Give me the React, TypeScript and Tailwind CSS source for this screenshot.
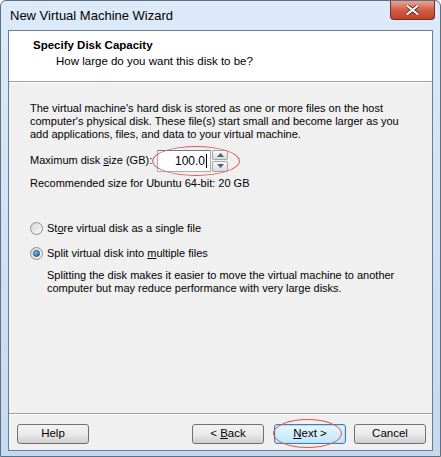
import React from 'react'

const font = { fontFamily: '"Liberation Sans", Arial, sans-serif' }

function Radio({ checked }: { checked?: boolean }) {
    return (
        <span className="relative inline-flex h-[13px] w-[13px] shrink-0 items-center justify-center rounded-full border border-[#8e8f8f] bg-gradient-to-br from-[#d6d6d6] to-[#f8f8f8]">
            {checked && (
                <span className="h-[7px] w-[7px] rounded-full border border-[#1c4a6e] bg-gradient-to-br from-[#8fd0f5] to-[#1a6aa8]" />
            )}
        </span>
    )
}

function Button({ label, focused }: { label: React.ReactNode; focused?: boolean }) {
    return (
        <div
            className={`flex h-[20px] w-[72px] items-center justify-center whitespace-pre rounded-[3px] border text-[11.5px] text-black ${
                focused
                    ? 'border-[#3c7fb1] bg-gradient-to-b from-[#eaf6fd] to-[#bee6fd] shadow-[inset_0_0_0_1px_#b4e0f8]'
                    : 'border-[#707070] bg-gradient-to-b from-[#f2f2f2] via-[#ebebeb] to-[#cfcfcf]'
            }`}
        >
            {label}
        </div>
    )
}

export default function App() {
    return (
        <div style={font} className="h-[457px] w-[441px] overflow-hidden bg-white">
            {/* window frame */}
            <div className="relative flex h-[457px] w-[441px] flex-col rounded-t-[6px] border border-[#5f6f80] bg-gradient-to-b from-[#dceafa] via-[#cfe2f6] to-[#c4daf2] px-[7px] pb-[5px]">
                {/* title bar */}
                <div className="flex h-[29px] shrink-0 items-center pl-[2px] text-[13px] text-black">
                    New Virtual Machine Wizard
                </div>
                <div className="absolute right-[5px] top-0 flex h-[19px] w-[45px] items-center justify-center rounded-b-[4px] border border-t-0 border-[#7a2b22] bg-gradient-to-b from-[#e8a494] via-[#d25d45] to-[#c2402a]">
                    <svg width="13" height="10" viewBox="0 0 13 10">
                        <path d="M1.5 1 L11.5 9 M11.5 1 L1.5 9" stroke="#4a2820" strokeWidth="3.6" strokeLinecap="square" />
                        <path d="M1.5 1 L11.5 9 M11.5 1 L1.5 9" stroke="#ffffff" strokeWidth="2" strokeLinecap="square" />
                    </svg>
                </div>

                {/* client area */}
                <div className="flex flex-1 flex-col border border-[#6e7b88] bg-[#f0f0f0] text-[11px] text-black">
                    {/* header */}
                    <div className="h-[51px] shrink-0 border-b border-[#a0a0a0] bg-white pl-[24px] pt-[6px]">
                        <div className="text-[11.5px] font-bold leading-[16px]">Specify Disk Capacity</div>
                        <div className="pl-[23px] text-[11.5px] leading-[16px]">How large do you want this disk to be?</div>
                    </div>
                    <div className="h-px shrink-0 bg-white" />

                    {/* body */}
                    <div className="flex flex-1 flex-col pl-[21px] pr-[20px] pt-[19px]">
                        <p className="leading-[13px]">
                            The virtual machine's hard disk is stored as one or more files on the host computer's physical disk. These file(s) start small and become larger as you add applications, files, and data to your virtual machine.
                        </p>

                        <div className="mt-[8px] flex h-[23px] items-center">
                            <span className="w-[127px] whitespace-nowrap">
                                Maximum disk <span className="underline">s</span>ize (GB):
                            </span>
                            <div className="relative flex items-center">
                                <div className="flex h-[22px] w-[54px] items-center justify-end border border-[#abadb3] border-t-[#6f7b8a] bg-white pr-[3px] text-[12px]">
                                    100.0<span className="ml-px h-[14px] w-px bg-black" />
                                </div>
                                <div className="ml-[1px] flex h-[22px] w-[16px] flex-col gap-px">
                                    <div className="flex flex-1 items-center justify-center rounded-[2px] border border-[#a4a4a4] bg-gradient-to-b from-[#f7f7f7] to-[#dcdcdc]">
                                        <svg width="7" height="4" viewBox="0 0 7 4"><path d="M0 4 L3.5 0 L7 4 Z" fill="#4d6185" /></svg>
                                    </div>
                                    <div className="flex flex-1 items-center justify-center rounded-[2px] border border-[#a4a4a4] bg-gradient-to-b from-[#f7f7f7] to-[#dcdcdc]">
                                        <svg width="7" height="4" viewBox="0 0 7 4"><path d="M0 0 L7 0 L3.5 4 Z" fill="#4d6185" /></svg>
                                    </div>
                                </div>
                                <div className="pointer-events-none absolute -left-[5px] -top-[4px] h-[30px] w-[88px] rounded-[50%] border border-[#e0584f]" />
                            </div>
                        </div>

                        <div className="mt-[5px] leading-[13px]">Recommended size for Ubuntu 64-bit: 20 GB</div>

                        <div className="mt-[32px] flex items-center gap-[4px] leading-[13px]">
                            <Radio />
                            <span>
                                St<span className="underline">o</span>re virtual disk as a single file
                            </span>
                        </div>
                        <div className="mt-[12px] flex items-center gap-[4px] leading-[13px]">
                            <Radio checked />
                            <span>
                                Split virtual disk into <span className="underline">m</span>ultiple files
                            </span>
                        </div>
                        <p className="mt-[9px] pl-[17px] leading-[13px]">
                            Splitting the disk makes it easier to move the virtual machine to another computer but may reduce performance with very large disks.
                        </p>
                    </div>

                    {/* footer */}
                    <div className="h-px shrink-0 bg-[#a0a0a0]" />
                    <div className="h-px shrink-0 bg-white" />
                    <div className="flex h-[35px] shrink-0 items-start pl-[8px] pr-[6px] pt-[9px]">
                        <Button label="Help" />
                        <div className="flex-1" />
                        <Button label={<>{'< '}<span className="underline">B</span>ack</>} />
                        <div className="relative ml-[10px]">
                            <Button focused label={<><span className="underline">N</span>{'ext >'}</>} />
                            <div className="pointer-events-none absolute -left-[1px] -top-[5px] h-[29px] w-[69px] rounded-[50%] border border-[#e0584f]" />
                        </div>
                        <div className="ml-[8px]">
                            <Button label="Cancel" />
                        </div>
                    </div>
                </div>
            </div>
        </div>
    )
}
